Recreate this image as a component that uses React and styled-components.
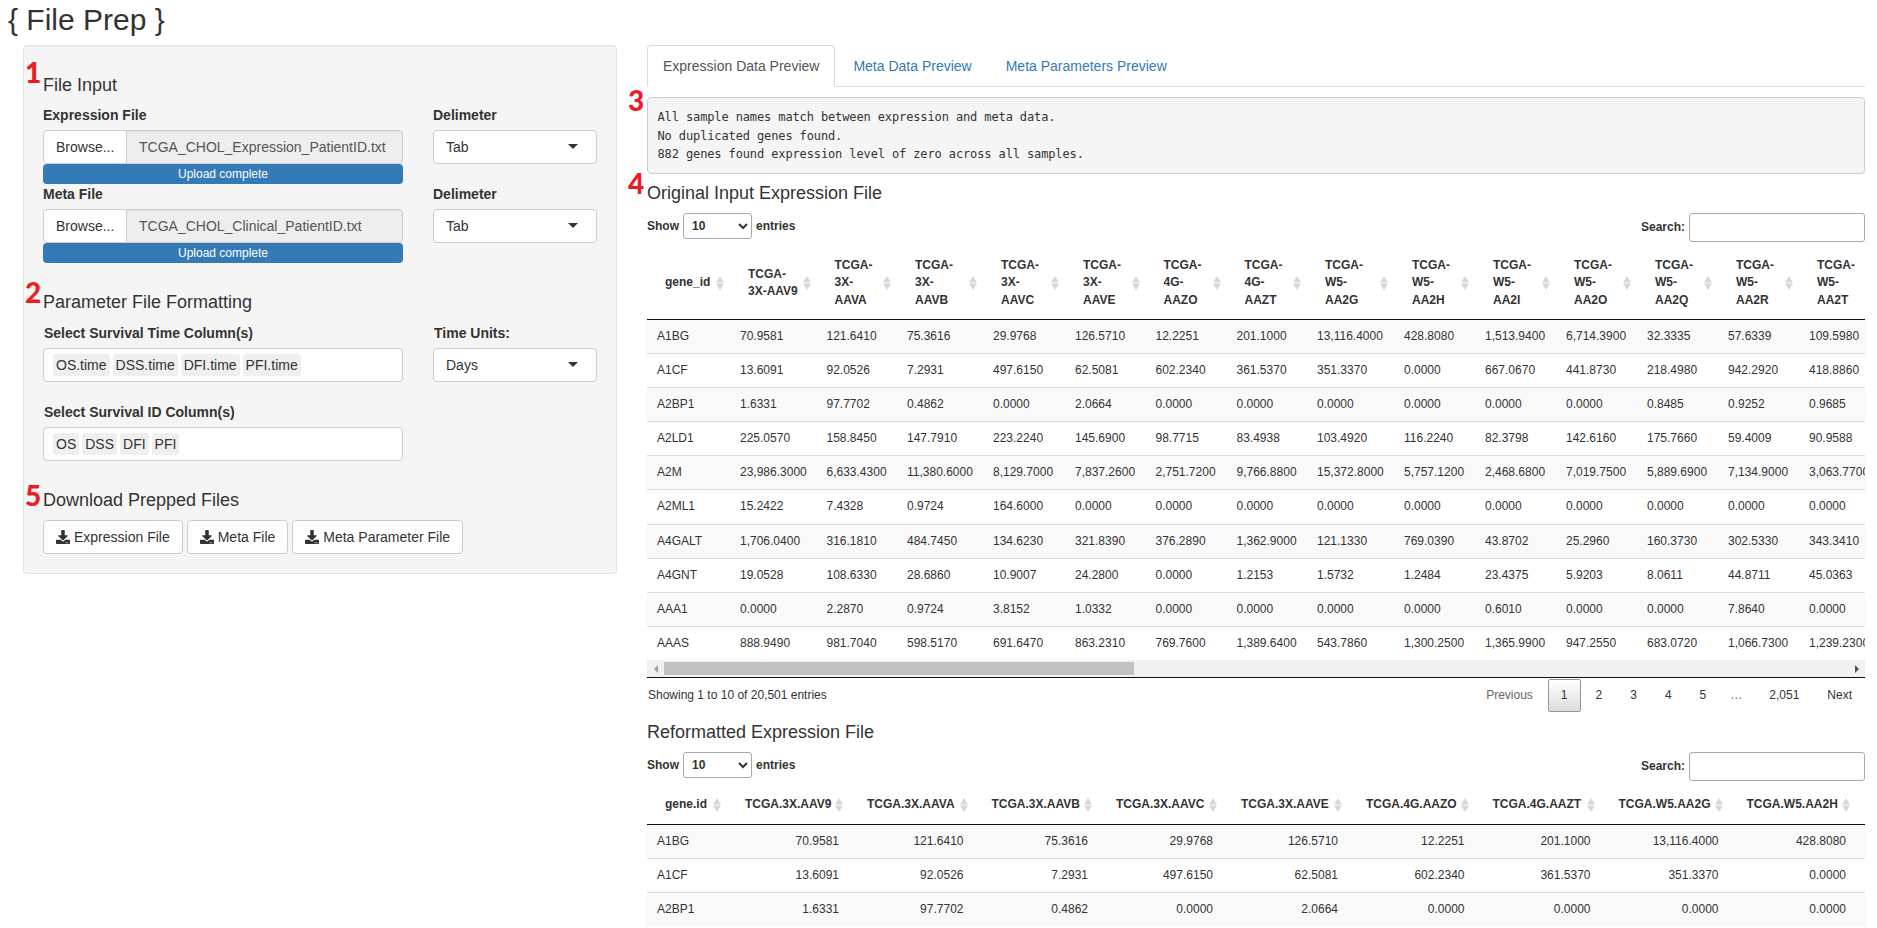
import React from "react";
import styled, { createGlobalStyle } from "styled-components";
import { FaDownload } from "react-icons/fa";

const originalCols = [83, 86.5, 80.5, 86, 82, 80.5, 81, 80.5, 87, 81, 81, 81, 81, 81, 90];
const originalHeaders = [
  "gene_id",
  "TCGA-\n3X-AAV9",
  "TCGA-\n3X-\nAAVA",
  "TCGA-\n3X-\nAAVB",
  "TCGA-\n3X-\nAAVC",
  "TCGA-\n3X-\nAAVE",
  "TCGA-\n4G-\nAAZO",
  "TCGA-\n4G-\nAAZT",
  "TCGA-\nW5-\nAA2G",
  "TCGA-\nW5-\nAA2H",
  "TCGA-\nW5-\nAA2I",
  "TCGA-\nW5-\nAA2O",
  "TCGA-\nW5-\nAA2Q",
  "TCGA-\nW5-\nAA2R",
  "TCGA-\nW5-\nAA2T",
];
const originalRows = [
  "A1BG 70.9581 121.6410 75.3616 29.9768 126.5710 12.2251 201.1000 13,116.4000 428.8080 1,513.9400 6,714.3900 32.3335 57.6339 109.5980",
  "A1CF 13.6091 92.0526 7.2931 497.6150 62.5081 602.2340 361.5370 351.3370 0.0000 667.0670 441.8730 218.4980 942.2920 418.8860",
  "A2BP1 1.6331 97.7702 0.4862 0.0000 2.0664 0.0000 0.0000 0.0000 0.0000 0.0000 0.0000 0.8485 0.9252 0.9685",
  "A2LD1 225.0570 158.8450 147.7910 223.2240 145.6900 98.7715 83.4938 103.4920 116.2240 82.3798 142.6160 175.7660 59.4009 90.9588",
  "A2M 23,986.3000 6,633.4300 11,380.6000 8,129.7000 7,837.2600 2,751.7200 9,766.8800 15,372.8000 5,757.1200 2,468.6800 7,019.7500 5,889.6900 7,134.9000 3,063.7700",
  "A2ML1 15.2422 7.4328 0.9724 164.6000 0.0000 0.0000 0.0000 0.0000 0.0000 0.0000 0.0000 0.0000 0.0000 0.0000",
  "A4GALT 1,706.0400 316.1810 484.7450 134.6230 321.8390 376.2890 1,362.9000 121.1330 769.0390 43.8702 25.2960 160.3730 302.5330 343.3410",
  "A4GNT 19.0528 108.6330 28.6860 10.9007 24.2800 0.0000 1.2153 1.5732 1.2484 23.4375 5.9203 8.0611 44.8711 45.0363",
  "AAA1 0.0000 2.2870 0.9724 3.8152 1.0332 0.0000 0.0000 0.0000 0.0000 0.6010 0.0000 0.0000 7.8640 0.0000",
  "AAAS 888.9490 981.7040 598.5170 691.6470 863.2310 769.7600 1,389.6400 543.7860 1,300.2500 1,365.9900 947.2550 683.0720 1,066.7300 1,239.2300",
];

const reformattedCols = [80, 122, 124.5, 124.5, 125, 125, 126.5, 126, 128, 127.5, 125];
const reformattedHeaders = [
  "gene.id",
  "TCGA.3X.AAV9",
  "TCGA.3X.AAVA",
  "TCGA.3X.AAVB",
  "TCGA.3X.AAVC",
  "TCGA.3X.AAVE",
  "TCGA.4G.AAZO",
  "TCGA.4G.AAZT",
  "TCGA.W5.AA2G",
  "TCGA.W5.AA2H",
  "TCGA.W5.AA2I",
];
const reformattedRows = [
  "A1BG 70.9581 121.6410 75.3616 29.9768 126.5710 12.2251 201.1000 13,116.4000 428.8080 1,513.9400",
  "A1CF 13.6091 92.0526 7.2931 497.6150 62.5081 602.2340 361.5370 351.3370 0.0000 667.0670",
  "A2BP1 1.6331 97.7702 0.4862 0.0000 2.0664 0.0000 0.0000 0.0000 0.0000 0.0000",
];

const pages = ["1", "2", "3", "4", "5"];

function SortIcon() {
  return (
    <SortSvg viewBox="0 0 8 14" width="8" height="14">
      <path d="M4 0 L8 6.5 L0 6.5 Z" />
      <path d="M0 7.5 L8 7.5 L4 14 Z" />
    </SortSvg>
  );
}

function DataTable({ cols, headers, rows, numeric }) {
  const total = cols.reduce((sum, w) => sum + w, 0);
  return (
    <Table $width={total}>
      <colgroup>
        {cols.map((w, i) => (
          <Col key={i} $width={w} />
        ))}
      </colgroup>
      <thead>
        <tr>
          {headers.map((h) => (
            <Th key={h}>
              {h}
              <SortIcon />
            </Th>
          ))}
        </tr>
      </thead>
      <tbody>
        {rows.map((row, r) => (
          <Tr key={r} $odd={r % 2 === 0}>
            {row.split(" ").map((cell, c) => (
              <Td key={c} $first={r === 0} $right={numeric && c > 0}>
                {cell}
              </Td>
            ))}
          </Tr>
        ))}
      </tbody>
    </Table>
  );
}

function TableControls() {
  return (
    <Controls>
      <ControlLabel>
        Show
        <LengthSelect defaultValue="10">
          <option value="10">10</option>
          <option value="25">25</option>
          <option value="50">50</option>
        </LengthSelect>
        entries
      </ControlLabel>
      <ControlLabel>
        Search:
        <SearchInput type="text" />
      </ControlLabel>
    </Controls>
  );
}

function FileField({ label, file }) {
  return (
    <div>
      <Label>{label}</Label>
      <FileGroup>
        <BrowseButton>Browse...</BrowseButton>
        <FileName>{file}</FileName>
      </FileGroup>
      <Progress>Upload complete</Progress>
    </div>
  );
}

function DropdownField({ label, value }) {
  return (
    <div>
      <Label>{label}</Label>
      <Dropdown>
        {value}
        <Caret />
      </Dropdown>
    </div>
  );
}

function TagField({ label, tags }) {
  return (
    <div>
      <ColumnLabel>{label}</ColumnLabel>
      <TagBox>
        {tags.map((t) => (
          <Tag key={t}>{t}</Tag>
        ))}
      </TagBox>
    </div>
  );
}

export default function App() {
  return (
    <Page>
      <GlobalStyle />
      <Title>{"{ File Prep }"}</Title>
      <Columns>
        <Panel>
          <Section>
            <Heading>
              <Marker $top={-17}>1</Marker>
              File Input
            </Heading>
            <FieldRow>
              <FileField label="Expression File" file="TCGA_CHOL_Expression_PatientID.txt" />
              <DropdownField label="Delimeter" value="Tab" />
            </FieldRow>
            <FieldRow>
              <FileField label="Meta File" file="TCGA_CHOL_Clinical_PatientID.txt" />
              <DropdownField label="Delimeter" value="Tab" />
            </FieldRow>
          </Section>
          <Section>
            <Heading>
              <Marker $top={-14}>2</Marker>
              Parameter File Formatting
            </Heading>
            <FieldStack>
              <FieldRow>
                <TagField
                  label="Select Survival Time Column(s)"
                  tags={["OS.time", "DSS.time", "DFI.time", "PFI.time"]}
                />
                <div>
                  <ColumnLabel>Time Units:</ColumnLabel>
                  <Dropdown>
                    Days
                    <Caret />
                  </Dropdown>
                </div>
              </FieldRow>
              <FieldRow>
                <TagField label="Select Survival ID Column(s)" tags={["OS", "DSS", "DFI", "PFI"]} />
              </FieldRow>
            </FieldStack>
          </Section>
          <Section>
            <Heading>
              <Marker $top={-9}>5</Marker>
              Download Prepped Files
            </Heading>
            <ButtonRow>
              <DownloadButton>
                <FaDownload size={14} />
                Expression File
              </DownloadButton>
              <DownloadButton>
                <FaDownload size={14} />
                Meta File
              </DownloadButton>
              <DownloadButton>
                <FaDownload size={14} />
                Meta Parameter File
              </DownloadButton>
            </ButtonRow>
          </Section>
        </Panel>

        <Main>
          <Tabs>
            <TabItem $active>Expression Data Preview</TabItem>
            <TabItem>Meta Data Preview</TabItem>
            <TabItem>Meta Parameters Preview</TabItem>
          </Tabs>
          <Console>
            <Marker $top={-12} $left={-20}>3</Marker>
            {"All sample names match between expression and meta data.\nNo duplicated genes found.\n882 genes found expression level of zero across all samples."}
          </Console>

          <TableHeading>
            <Marker $top={-14} $left={-19}>4</Marker>
            Original Input Expression File
          </TableHeading>
          <TableControls />
          <TableClip>
            <DataTable cols={originalCols} headers={originalHeaders} rows={originalRows} />
          </TableClip>
          <Scrollbar>
            <ScrollArrow $dir="left" />
            <ScrollThumb />
            <ScrollArrow $dir="right" />
          </Scrollbar>
          <Footer>
            <span>Showing 1 to 10 of 20,501 entries</span>
            <Pagination>
              <PageLink $muted>Previous</PageLink>
              {pages.map((p) => (
                <PageLink key={p} $current={p === "1"}>
                  {p}
                </PageLink>
              ))}
              <PageGap>…</PageGap>
              <PageLink>2,051</PageLink>
              <PageLink>Next</PageLink>
            </Pagination>
          </Footer>

          <TableHeading>Reformatted Expression File</TableHeading>
          <TableControls />
          <TableClip>
            <DataTable cols={reformattedCols} headers={reformattedHeaders} rows={reformattedRows} numeric />
          </TableClip>
        </Main>
      </Columns>
    </Page>
  );
}

const GlobalStyle = createGlobalStyle`
  html, body {
    margin: 0;
    height: 928px;
    overflow: hidden;
    background: #fff;
  }
  body {
    font-family: "Liberation Sans", Arial, sans-serif;
    font-size: 14px;
    line-height: 20px;
    color: #333;
  }
  * {
    box-sizing: border-box;
  }
`;

const Page = styled.div`
  width: 1877px;
  height: 928px;
  overflow: hidden;
`;
const Title = styled.h2`
  margin: 0;
  padding: 3px 0 0 8px;
  height: 45px;
  font-size: 30px;
  font-weight: 400;
  line-height: 33px;
`;
const Columns = styled.div`
  display: grid;
  grid-template-columns: 594px 1218px;
  column-gap: 30px;
  align-items: start;
  padding-left: 23px;
`;
const Panel = styled.div`
  padding: 19px;
  background: #f5f5f5;
  border: 1px solid #e3e3e3;
  border-radius: 4px;
  box-shadow: inset 0 1px 1px rgba(0, 0, 0, 0.05);
  display: flex;
  flex-direction: column;
  gap: 19px;
`;
const Section = styled.section`
  display: block;
`;
const Heading = styled.h4`
  position: relative;
  margin: 10px 0;
  font-size: 18px;
  font-weight: 400;
  line-height: 20px;
`;
const Marker = styled.span`
  position: absolute;
  left: ${(p) => p.$left ?? -18}px;
  top: ${(p) => p.$top}px;
  font-family: Lato, "Open Sans", sans-serif;
  font-size: 28px;
  font-weight: 900;
  line-height: 28px;
  color: #ed1c24;
`;
const FieldRow = styled.div`
  display: grid;
  grid-template-columns: 360px 164px;
  column-gap: 30px;
`;
const FieldStack = styled.div`
  display: flex;
  flex-direction: column;
  gap: 20px;
  padding-top: 1px;
`;
const Label = styled.label`
  display: block;
  margin-bottom: 5px;
  font-weight: 700;
`;
const ColumnLabel = styled(Label)`
  margin-left: 1px;
`;
const FileGroup = styled.div`
  display: flex;
  height: 34px;
`;
const BrowseButton = styled.span`
  width: 84px;
  padding: 6px 12px;
  background: #fff;
  border: 1px solid #ccc;
  border-radius: 4px 0 0 4px;
`;
const FileName = styled.span`
  flex: 1;
  padding: 6px 12px;
  margin-left: -1px;
  background: #eee;
  border: 1px solid #ccc;
  border-radius: 0 4px 4px 0;
  color: #555;
  white-space: nowrap;
  box-shadow: inset 0 1px 1px rgba(0, 0, 0, 0.075);
`;
const Progress = styled.div`
  height: 20px;
  background: #337ab7;
  border-radius: 4px;
  color: #fff;
  font-size: 12px;
  line-height: 20px;
  text-align: center;
`;
const Dropdown = styled.div`
  display: flex;
  align-items: center;
  justify-content: space-between;
  height: 34px;
  padding: 0 18px 0 12px;
  background: #fff;
  border: 1px solid #ccc;
  border-radius: 4px;
`;
const Caret = styled.i`
  width: 0;
  height: 0;
  margin-top: -2px;
  border-style: solid;
  border-width: 5px 5px 0;
  border-color: #333 transparent transparent;
`;
const TagBox = styled.div`
  display: flex;
  align-items: center;
  gap: 3px;
  height: 34px;
  padding: 0 9px;
  background: #fff;
  border: 1px solid #ccc;
  border-radius: 4px;
`;
const Tag = styled.span`
  padding: 0 3px;
  height: 22px;
  line-height: 22px;
  background: #efefef;
  border-radius: 3px;
`;
const ButtonRow = styled.div`
  display: flex;
  gap: 4px;
`;
const DownloadButton = styled.button`
  display: inline-flex;
  align-items: center;
  gap: 4px;
  height: 34px;
  padding: 0 12px;
  background: #fff;
  border: 1px solid #ccc;
  border-radius: 4px;
  color: #333;
  font: inherit;
  white-space: nowrap;
`;

const Main = styled.div`
  min-width: 0;
`;
const Tabs = styled.ul`
  display: flex;
  gap: 2px;
  margin: 0;
  padding: 0;
  list-style: none;
  border-bottom: 1px solid #ddd;
`;
const TabItem = styled.li`
  margin-bottom: -1px;
  padding: 10px 15px;
  border: 1px solid ${(p) => (p.$active ? "#ddd" : "transparent")};
  border-bottom-color: ${(p) => (p.$active ? "#fff" : "transparent")};
  border-radius: 4px 4px 0 0;
  background: ${(p) => (p.$active ? "#fff" : "transparent")};
  color: ${(p) => (p.$active ? "#555" : "#337ab7")};
`;
const Console = styled.pre`
  position: relative;
  margin: 10px 0 0;
  height: 77px;
  padding: 10px 9.5px;
  background: #f5f5f5;
  border: 1px solid #ccc;
  border-radius: 4px;
  color: #333;
  font-family: "DejaVu Sans Mono", "Liberation Mono", monospace;
  font-size: 12px;
  line-height: 18.5px;
  letter-spacing: -0.12px;
`;
const TableHeading = styled(Heading)`
  margin-top: 9px;
`;
const Controls = styled.div`
  display: flex;
  justify-content: space-between;
  align-items: flex-start;
  height: 34.3px;
`;
const ControlLabel = styled.label`
  display: flex;
  align-items: center;
  font-size: 12px;
  font-weight: 700;
  line-height: 17px;
`;
const LengthSelect = styled.select`
  width: 69px;
  height: 26px;
  margin: 0 4px;
  padding: 0 4px;
  background: #fff;
  border: 1px solid #aaa;
  border-radius: 3px;
  color: #333;
  font: inherit;
`;
const SearchInput = styled.input`
  width: 176px;
  height: 29px;
  margin-left: 4px;
  background: transparent;
  border: 1px solid #aaa;
  border-radius: 3px;
`;
const TableClip = styled.div`
  overflow: hidden;
  width: 100%;
`;
const Table = styled.table`
  table-layout: fixed;
  width: ${(p) => p.$width}px;
  border-collapse: separate;
  border-spacing: 0;
  font-size: 12px;
  line-height: 1.42857;
`;
const Col = styled.col`
  width: ${(p) => p.$width}px;
`;
const Th = styled.th`
  position: relative;
  padding: 10px 18px;
  border-bottom: 1px solid #111;
  font-weight: 700;
  text-align: left;
  white-space: pre;
`;
const SortSvg = styled.svg`
  position: absolute;
  right: 6px;
  top: 50%;
  margin-top: -7px;
  fill: #d8d8d8;
`;
const Tr = styled.tr`
  background: ${(p) => (p.$odd ? "#f9f9f9" : "#fff")};
`;
const Td = styled.td`
  padding: 8px 10px;
  border-top: ${(p) => (p.$first ? "none" : "1px solid #ddd")};
  text-align: ${(p) => (p.$right ? "right" : "left")};
  white-space: nowrap;
`;
const Scrollbar = styled.div`
  display: flex;
  height: 18px;
  background: #f1f1f1;
  border-bottom: 1px solid #111;
`;
const ScrollArrow = styled.span`
  display: flex;
  align-items: center;
  justify-content: center;
  width: 17px;
  height: 17px;
  &::before {
    content: "";
    border-style: solid;
    border-width: 4px 0 4px 4px;
    border-color: transparent transparent transparent #505050;
    transform: ${(p) => (p.$dir === "left" ? "rotate(180deg)" : "none")};
    opacity: ${(p) => (p.$dir === "left" ? 0.5 : 1)};
  }
`;
const ScrollThumb = styled.span`
  width: 470px;
  height: 13px;
  margin: 2px auto 0 0;
  background: #c1c1c1;
`;
const Footer = styled.div`
  display: flex;
  justify-content: space-between;
  align-items: center;
  height: 35px;
  padding-left: 1px;
  font-size: 12px;
  line-height: 17px;
`;
const Pagination = styled.div`
  display: flex;
  gap: 2px;
`;
const PageLink = styled.span`
  padding: 7px 12px;
  border: 1px solid ${(p) => (p.$current ? "#979797" : "transparent")};
  border-radius: 2px;
  background: ${(p) => (p.$current ? "linear-gradient(to bottom, #fff 0%, #dcdcdc 100%)" : "transparent")};
  color: ${(p) => (p.$muted ? "#666" : "#333")};
`;
const PageGap = styled.span`
  padding: 8px 12px 8px 9px;
  color: #666;
`;
